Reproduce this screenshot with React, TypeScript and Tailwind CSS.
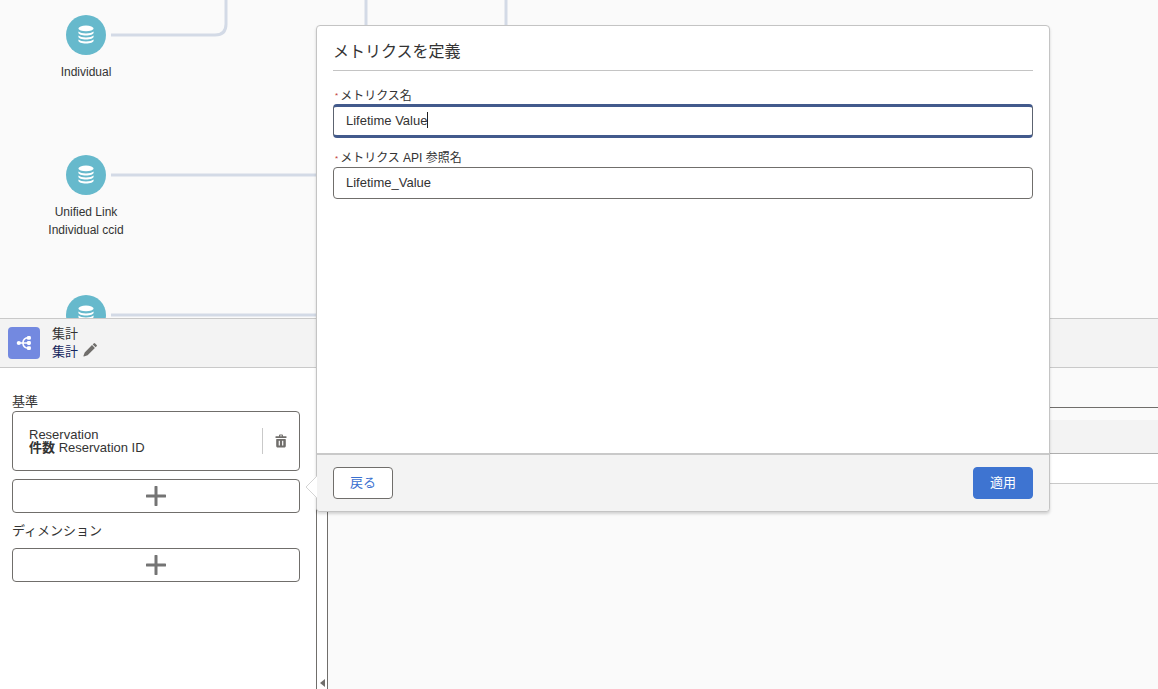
import { useState } from 'react';

const nodes = [
  { id: 'individual', lines: ['Individual'], top: 'top-[15px]' },
  { id: 'unified-link', lines: ['Unified Link', 'Individual ccid'], top: 'top-[155px]' },
  { id: 'next', lines: [], top: 'top-[295px]' },
];

function DatabaseIcon() {
  return (
    <svg viewBox="0 0 16 20" className="w-4 h-5" fill="#fff" aria-hidden="true">
      <ellipse cx="8" cy="3.4" rx="7.6" ry="2.8" />
      <path d="M.4 6.400c1.500 1.300 4.300 2 7.600 2s6.100-.7 7.600-2v1.400c0 1.600-3.300 2.700-7.600 2.700S.4 9.400.4 7.800z" />
      <path d="M.4 10.400c1.500 1.300 4.300 2 7.600 2s6.100-.7 7.600-2v1.400c0 1.600-3.300 2.700-7.600 2.700S.4 13.400.4 11.800z" />
      <path d="M.4 14.400c1.500 1.300 4.300 2 7.600 2s6.100-.7 7.600-2v1.400c0 1.600-3.300 2.700-7.600 2.700S.4 17.400.4 15.800z" />
    </svg>
  );
}

function AggregateIcon() {
  return (
    <svg viewBox="0 0 16 16" className="w-4 h-4" fill="none" stroke="#fff" strokeWidth="1.6" aria-hidden="true">
      <path d="M3 8h10M12.500 2.800C9 2.800 7.200 4.500 6.800 8c.4 3.500 2.200 5.200 5.700 5.200" />
      <circle cx="2.800" cy="8" r="2.100" fill="#fff" stroke="none" />
      <rect x="10.900" y=".9" width="4" height="3.800" rx="1.300" fill="#fff" stroke="none" />
      <rect x="10.900" y="6.100" width="4" height="3.800" rx="1.300" fill="#fff" stroke="none" />
      <rect x="10.900" y="11.300" width="4" height="3.800" rx="1.300" fill="#fff" stroke="none" />
    </svg>
  );
}

function PencilIcon() {
  return (
    <svg viewBox="0 0 14 14" className="w-3.5 h-3.5" fill="#706e6b" aria-hidden="true">
      <path d="M1.700 9.400 9 2.100 11.900 5 4.600 12.300.9 13.400a.4.4 0 0 1-.5-.5z" />
      <path d="m9.700 1.400 1-1a1 1 0 0 1 1.400 0l1.500 1.500a1 1 0 0 1 0 1.400l-1 1z" />
    </svg>
  );
}

function TrashIcon() {
  return (
    <svg viewBox="0 0 12 14" className="w-3 h-3.5" fill="#706e6b" aria-hidden="true">
      <path d="M4 2.300V1.500C4 .8 4.500.4 5.100.4h1.800c.6 0 1.100.4 1.100 1.100v.8h3c.3 0 .6.2.6.500v.6c0 .3-.3.500-.6.500H1c-.3 0-.6-.2-.6-.5v-.6c0-.3.300-.5.600-.5zm1.100 0h1.800v-.8H5.100z" />
      <path
        fillRule="evenodd"
        d="M1.700 5h8.600c.3 0 .5.200.5.500v6.600c0 .8-.6 1.500-1.500 1.500H2.700c-.9 0-1.500-.7-1.500-1.500V5.500c0-.3.200-.5.500-.5zM3.700 6.700v4.800h1.200V6.700zm3.400 0v4.800h1.200V6.700z"
      />
    </svg>
  );
}

function AddButton({ label }: { label: string }) {
  return (
    <button
      type="button"
      aria-label={label}
      className="w-full h-[34px] flex items-center justify-center bg-white border border-[#706e6b] rounded"
    >
      <svg viewBox="0 0 20 20" className="w-5 h-5" stroke="#747474" strokeWidth="3" strokeLinecap="round" aria-hidden="true">
        <path d="M10 1v18M1 10h18" />
      </svg>
    </button>
  );
}

function RequiredMark() {
  return <span className="text-[8px] text-[#c23934]">*</span>;
}

function Canvas() {
  return (
    <section className="relative h-[318px] shrink-0 overflow-hidden">
      <svg className="absolute inset-0 w-full h-full" fill="none" stroke="#d3dae6" strokeWidth="3">
        <path d="M111 35h104q11 0 11-11V0" />
        <path d="M366 0v60M506 0v60" />
        <path d="M111 175h400M111 315h400" />
      </svg>
      {nodes.map((node) => (
        <div key={node.id} className={`absolute left-[26px] w-[120px] flex flex-col items-center ${node.top}`}>
          <div className="w-10 h-10 rounded-full bg-[#66b9cc] flex items-center justify-center">
            <DatabaseIcon />
          </div>
          <div className="mt-2 text-xs leading-[18px] text-center">
            {node.lines.map((line) => (
              <div key={line}>{line}</div>
            ))}
          </div>
        </div>
      ))}
    </section>
  );
}

function MetricPopover() {
  const [name, setName] = useState('Lifetime Value');
  const [apiName, setApiName] = useState('Lifetime_Value');

  return (
    <div
      role="dialog"
      aria-labelledby="metric-title"
      className="absolute top-[25px] left-[316px] right-[108px] h-[487px] flex flex-col bg-white border border-[#c4c4c4] rounded-sm shadow-[0_2px_3px_rgba(0,0,0,0.16)]"
    >
      {/* Pointer towards the add button */}
      <svg viewBox="0 0 12 24" className="absolute -left-3 top-[449px] w-3 h-6 overflow-visible" aria-hidden="true">
        <path d="M12 1 1 12l11 11" fill="#fff" stroke="#d4d4d4" />
      </svg>

      <div className="flex-1 px-4">
        <h2 id="metric-title" className="h-[45px] pt-[14px] text-base leading-6 border-b border-[#c4c4c4]">
          メトリクスを定義
        </h2>
        <form className="pt-[17px]">
          <label htmlFor="metric-name" className="flex gap-0.5 pl-0.5 text-xs leading-4">
            <RequiredMark />
            メトリクス名
          </label>
          <div className="relative">
            <input
              id="metric-name"
              required
              value={name}
              onChange={(e) => setName(e.target.value)}
              className="block w-full h-[34px] px-3 pb-0.5 text-[13px] leading-4 bg-white border-x border-y-[3px] border-x-[#5c6370] border-y-[#425a8c] rounded outline-none"
            />
            <span className="absolute left-[94px] top-2 w-px h-4 bg-[#222]" />
          </div>
          <label htmlFor="metric-api-name" className="mt-3 flex gap-0.5 pl-0.5 text-xs leading-[17px]">
            <RequiredMark />
            メトリクス API 参照名
          </label>
          <input
            id="metric-api-name"
            required
            value={apiName}
            onChange={(e) => setApiName(e.target.value)}
            className="block w-full h-8 px-3 pb-0.5 text-[13px] leading-4 bg-white border border-[#706e6b] rounded outline-none"
          />
        </form>
      </div>

      <footer className="flex justify-between p-3 px-4 bg-[#f3f3f3] border-t-2 border-[#c9c9c9] rounded-b-sm">
        <button type="button" className="h-8 px-4 text-[13px] text-[#3a70d0] bg-white border border-[#706e6b] rounded">
          戻る
        </button>
        <button type="button" className="h-8 px-4 text-[13px] text-white bg-[#3e74d1] border border-[#3e74d1] rounded">
          適用
        </button>
      </footer>
    </div>
  );
}

export default function App() {
  return (
    <div className="relative h-screen flex flex-col overflow-hidden bg-[#fafafa] text-[#333] font-['Liberation_Sans','Noto_Sans_CJK_JP',sans-serif]">
      <Canvas />

      <header className="h-[50px] shrink-0 flex items-center gap-3 px-2 bg-[#f3f3f3] border-y border-[#c9c9c9]">
        <div className="w-8 h-8 rounded bg-[#7389e0] flex items-center justify-center">
          <AggregateIcon />
        </div>
        <div className="text-[13px] leading-[18px]">
          <div>集計</div>
          <div className="flex items-start gap-[5px]">
            <span className="text-[#16275e]">集計</span>
            <button type="button" aria-label="名前を編集">
              <PencilIcon />
            </button>
          </div>
        </div>
      </header>

      <div className="flex-1 flex min-h-0">
        <aside className="w-[316px] shrink-0 bg-white pl-3 pr-4 pt-6 text-[13px]">
          <h3 className="leading-[19px]">基準</h3>
          <div className="h-[60px] flex items-center pl-4 pr-3 border border-[#706e6b] rounded">
            <div className="flex-1 leading-[13px]">
              <div>Reservation</div>
              <div>
                <b>件数</b> Reservation ID
              </div>
            </div>
            <div className="h-[26px] flex items-center pl-3 border-l border-[#c9c9c9]">
              <button type="button" aria-label="削除">
                <TrashIcon />
              </button>
            </div>
          </div>
          <div className="mt-2">
            <AddButton label="基準を追加" />
          </div>
          <h3 className="mt-2 mb-2 leading-[19px]">ディメンション</h3>
          <AddButton label="ディメンションを追加" />
        </aside>

        {/* Resize handle */}
        <div className="w-3 shrink-0 flex items-end justify-center pb-0.5 bg-white border-x border-[#706e6b]">
          <svg viewBox="0 0 5 8" className="w-[5px] h-2" fill="#706e6b" aria-hidden="true">
            <path d="M0 4 5 0v8z" />
          </svg>
        </div>

        <main className="flex-1">
          <div className="h-10 border-b border-[#706e6b]" />
          <div className="mt-3 h-[34px] bg-[#f3f3f3] border-b border-[#aeaeae]" />
          <div className="h-[30px] bg-white border-b border-[#c9c9c9]" />
        </main>
      </div>

      <MetricPopover />
    </div>
  );
}
